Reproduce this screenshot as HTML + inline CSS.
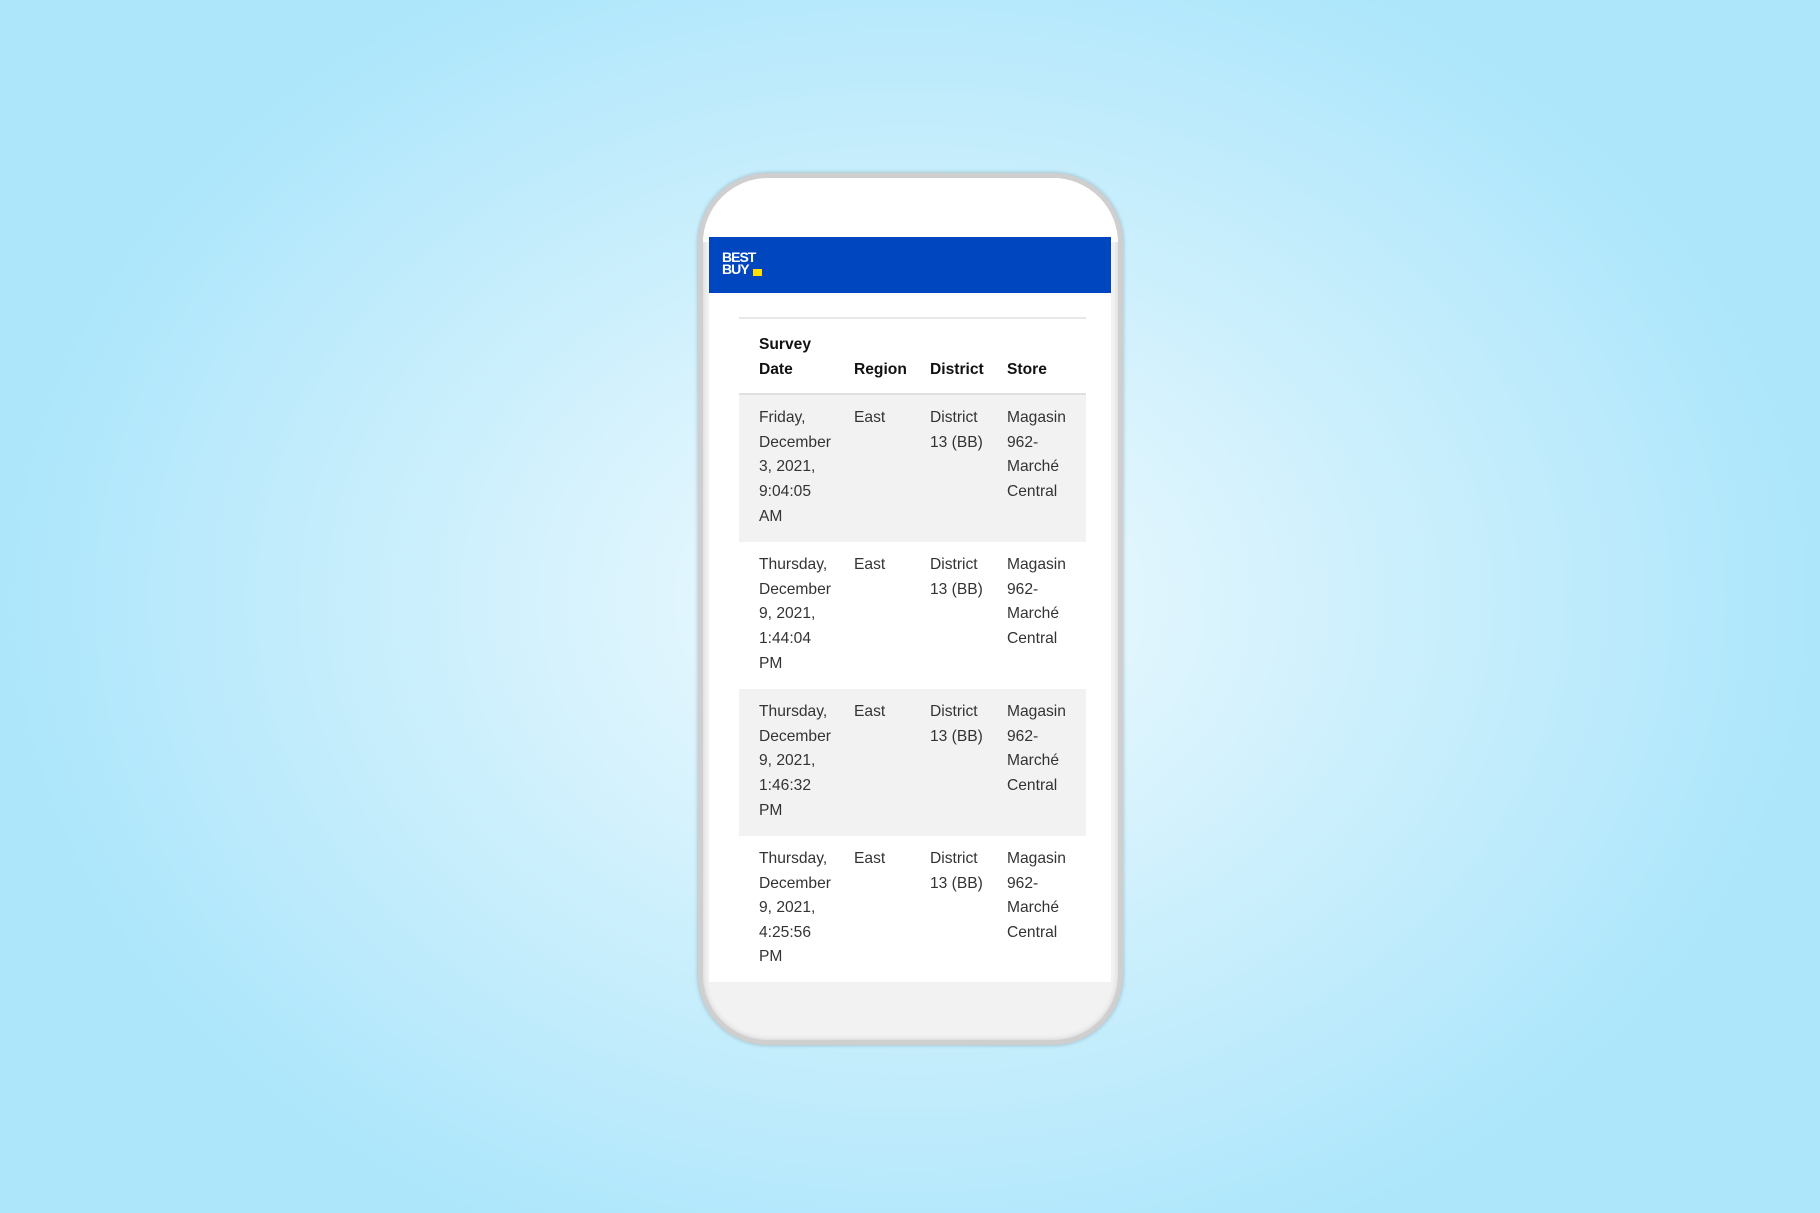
<!DOCTYPE html>
<html><head><meta charset="utf-8"><style>
*{margin:0;padding:0;box-sizing:border-box}
body{width:1820px;height:1213px;overflow:hidden;background:radial-gradient(ellipse 900px 700px at 910px 600px,#f2fbfe 0%,#d2f1fd 45%,#ade6fb 100%);font-family:"Liberation Sans",sans-serif;position:relative}
.phone{position:absolute;left:698px;top:173px;width:425px;height:872px;border-radius:70px;background:#f2f2f2;border:5px solid #cfcfcf;box-shadow:0 0 4px rgba(0,0,0,.25),inset 0 0 6px rgba(0,0,0,.15);overflow:hidden}
.top{position:absolute;left:0;top:0;width:100%;height:64px;background:#fff}
.hdr{position:absolute;left:6px;top:59px;width:402px;height:56px;background:#0046be}
.logo{position:absolute;left:13px;top:15px;color:#fff;font-weight:900;font-size:14px;line-height:11.5px;letter-spacing:-1px}
.tag{position:absolute;left:44px;top:32px;width:9px;height:7px;background:#ffe000}
.content{position:absolute;left:6px;top:115px;width:402px;height:689px;background:#fff}
table{position:absolute;left:30px;top:24px;width:347px;border-collapse:collapse;border-top:2px solid #e8e8e8;font-size:15.6px;line-height:24.6px;color:#333}
th{font-weight:bold;color:#111;text-align:left;vertical-align:bottom;padding:14px 0 11px 20px;border-bottom:2px solid #e0e0e0}
td{vertical-align:top;padding:11px 0 13px 20px}
tr.g td{background:#f2f2f2}
.c1{width:95px}.c2{width:76px}.c3{width:77px}
</style></head><body>
<div class="phone">
<div class="top"></div>
<div class="hdr"><div class="logo">BEST<br>BUY</div><div class="tag"></div></div>
<div class="content">
<table>
<tr><th class="c1">Survey<br>Date</th><th class="c2">Region</th><th class="c3">District</th><th>Store</th></tr>
<tr class="g"><td>Friday,<br>December<br>3, 2021,<br>9:04:05<br>AM</td><td>East</td><td>District<br>13 (BB)</td><td>Magasin<br>962-<br>Marché<br>Central</td></tr>
<tr><td>Thursday,<br>December<br>9, 2021,<br>1:44:04<br>PM</td><td>East</td><td>District<br>13 (BB)</td><td>Magasin<br>962-<br>Marché<br>Central</td></tr>
<tr class="g"><td>Thursday,<br>December<br>9, 2021,<br>1:46:32<br>PM</td><td>East</td><td>District<br>13 (BB)</td><td>Magasin<br>962-<br>Marché<br>Central</td></tr>
<tr><td>Thursday,<br>December<br>9, 2021,<br>4:25:56<br>PM</td><td>East</td><td>District<br>13 (BB)</td><td>Magasin<br>962-<br>Marché<br>Central</td></tr>
</table>
</div>
</div>
</body></html>
